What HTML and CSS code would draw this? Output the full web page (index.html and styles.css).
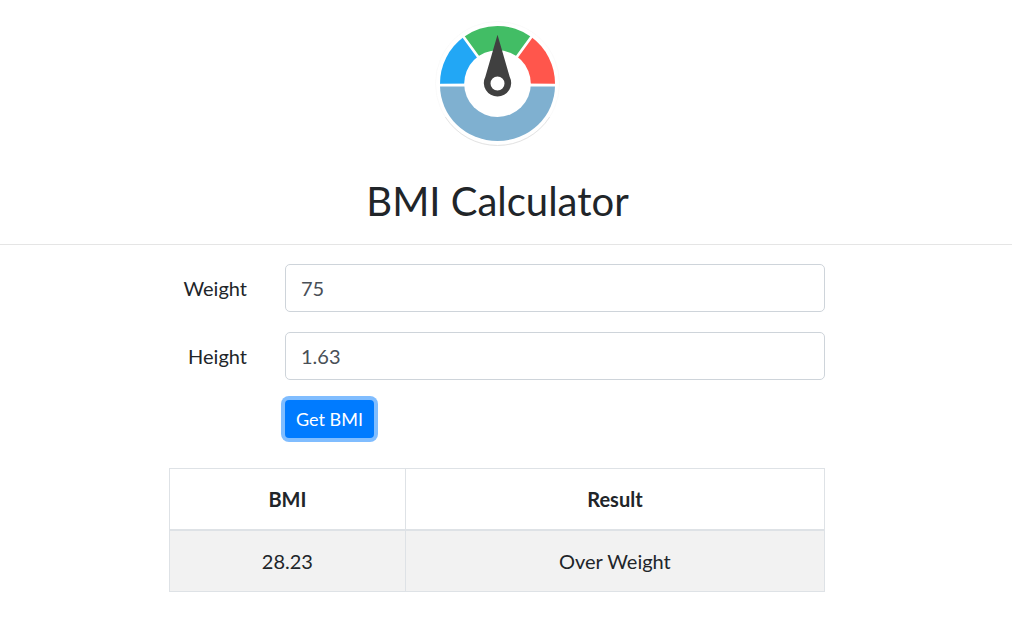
FILE: index.html
```html
<!DOCTYPE html>
<html lang="en">
<head>
<meta charset="utf-8">
<meta name="viewport" content="width=device-width, initial-scale=1">
<title>BMI Calculator</title>
<link rel="stylesheet" href="styles.css">
</head>
<body>
<header class="header">
  <svg class="logo" viewBox="30 33 375 375" role="img" aria-label="BMI gauge">
    <circle cx="217.500" cy="220.500" r="186" fill="#fff" stroke="#f7f7f7" stroke-width="2"/>
    <path d="M61 321A186 186 0 0 0 374 321" fill="none" stroke="#e4e4e4" stroke-width="3"/>
    <path d="M45 222A172.500 172.500 0 0 1 116 81L217.500 220.500Z" fill="#22a7f5"/>
    <path d="M116 81A172.500 172.500 0 0 1 319 81L217.500 220.500Z" fill="#42bd65"/>
    <path d="M319 81A172.500 172.500 0 0 1 390 222L217.500 220.500Z" fill="#ff564c"/>
    <path d="M45 226A172.500 167 0 0 0 390 226Z" fill="#7fb0d0"/>
    <path d="M40 225.500H395M110 73L217.500 220.500L325 73" fill="none" stroke="#fff" stroke-width="8"/>
    <circle cx="217.500" cy="221" r="100" fill="#fff"/>
    <path d="M217.500 74L254 200A41 41 0 1 1 181 200ZM217.500 199.500A21 21 0 1 0 217.500 241.500A21 21 0 1 0 217.500 199.500Z" fill="#404040" fill-rule="evenodd"/>
  </svg>
  <h1 class="title">BMI Calculator</h1>
</header>
<main class="main">
  <form class="form">
    <label class="label" for="weight">Weight</label>
    <input class="input" id="weight" type="text" value="75">
    <label class="label" for="height">Height</label>
    <input class="input" id="height" type="text" value="1.63">
    <button class="button" type="button">Get BMI</button>
  </form>
  <table class="table">
    <thead>
      <tr><th class="bmi" scope="col">BMI</th><th scope="col">Result</th></tr>
    </thead>
    <tbody>
      <tr><td>28.23</td><td>Over Weight</td></tr>
    </tbody>
  </table>
</main>
</body>
</html>
```
FILE: styles.css
```css
* {
  box-sizing: border-box;
}

body {
  margin: 0;
  background: #fff;
  color: #212529;
  font: 20px/30px Lato, sans-serif;
}

.header {
  display: flex;
  flex-direction: column;
  align-items: center;
  padding: 21px 17px 18px 0;
  border-bottom: 1px solid #e5e5e5;
}

.logo {
  display: block;
  width: 125px;
  height: 125px;
}

.title {
  margin: 30px 0 0;
  font-size: 40px;
  line-height: 50px;
  font-weight: 400;
}

.main {
  max-width: 674px;
  margin: 0 auto;
  padding: 19px 18px 30px 0;
}

.form {
  display: grid;
  grid-template-columns: 116px 1fr;
  row-gap: 20px;
  align-items: center;
}

.label {
  padding-right: 38px;
  text-align: right;
}

.input {
  width: 100%;
  height: 48px;
  padding: 8px 15px;
  border: 1px solid #ced4da;
  border-radius: 5px;
  background: #fff;
  color: #495057;
  font: inherit;
}

.button {
  grid-column: 2;
  justify-self: start;
  height: 38px;
  padding: 0 11px;
  border: 0;
  border-radius: 4px;
  background: #007bff;
  box-shadow: 0 0 0 4px #80bdff;
  color: #fff;
  font: 18px/36px Lato, sans-serif;
}

.table {
  width: 100%;
  margin-top: 30px;
  border-collapse: collapse;
  text-align: center;
}

.table th,
.table td {
  padding: 15px 12px;
  border: 1px solid #dee2e6;
}

.table th {
  border-bottom-width: 2px;
}

.table td {
  background: #f2f2f2;
}

.bmi {
  width: 36%;
}
```
